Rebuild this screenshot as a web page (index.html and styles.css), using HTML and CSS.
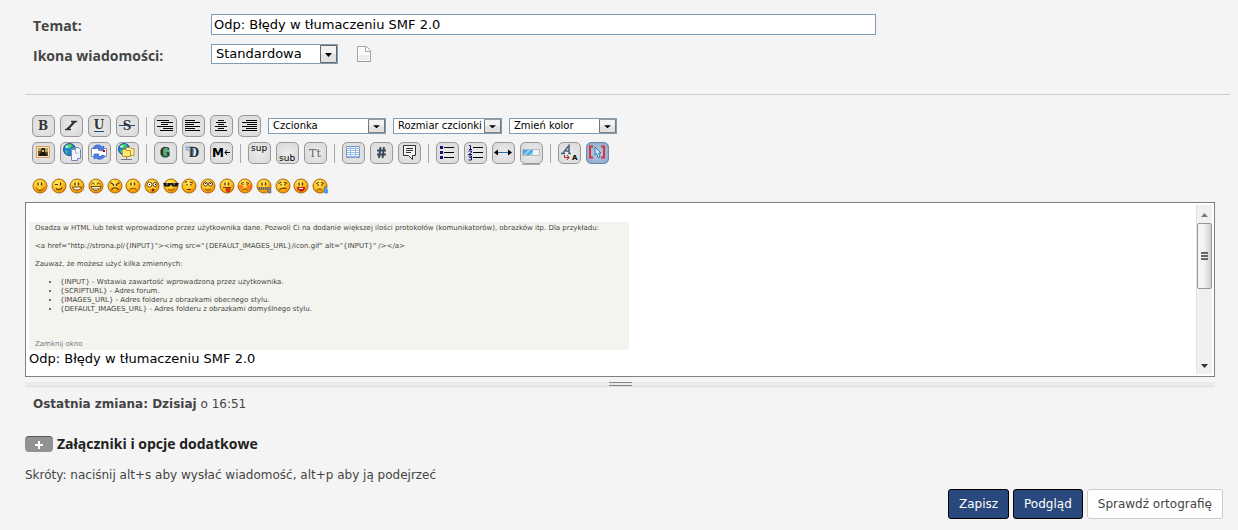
FILE: index.html
```
<!DOCTYPE html>
<html lang="pl">

<head>
    <meta charset="UTF-8">
    <title>Odp: Błędy w tłumaczeniu SMF 2.0</title>
    <link rel="stylesheet" href="styles.css">
</head>

<body>
    <!-- shared shapes -->
    <svg class="defs" width="0" height="0">
        <defs>
            <radialGradient id="skin" cx="40%" cy="30%" r="70%">
                <stop offset="0" stop-color="#ffee70" />
                <stop offset="0.55" stop-color="#ffc21c" />
                <stop offset="1" stop-color="#f08a00" />
            </radialGradient>
            <symbol id="face" viewBox="0 0 16 16">
                <circle cx="8" cy="8" r="7" fill="url(#skin)" stroke="#a8690c" />
            </symbol>
            <symbol id="eyes" viewBox="0 0 16 16">
                <path d="M6 4.500v3M9.500 4.500v3" stroke="#5a3000" stroke-width="1.300" />
            </symbol>
            <symbol id="globe" viewBox="0 0 16 16">
                <circle cx="7" cy="7" r="6.500" fill="#1f7fd8" stroke="#164c8c" />
                <path d="M2 4l4-3 4 1-2 3-3 1zM8 7l4-2 1 3-3 4zM2 8l3 1-1 3z" fill="#4edb4e" />
                <path d="M3 5l2-2" stroke="#d4f4ff" stroke-width="2" />
            </symbol>
        </defs>
    </svg>

    <form class="post-form" action="#">
        <div class="post-header">
            <label for="subject">Temat:</label>
            <div class="field"><input type="text" id="subject" class="subject" value="Odp: Błędy w tłumaczeniu SMF 2.0"></div>
            <label for="icon">Ikona wiadomości:</label>
            <div class="field">
                <select id="icon" class="icon-select">
                    <option>Standardowa</option>
                </select>
                <svg class="page-icon" width="14" height="16" viewBox="0 0 14 16">
                    <path d="M1 .500h8.500l4 4v11H.500V.500z" fill="#fafafa" stroke="#a5a5a5" />
                    <path d="M2 9h10v5H2z" fill="#ececec" />
                    <path d="M8.500 1v4.500H13" fill="#fff" stroke="#a5a5a5" />
                    <path d="M0 15.500h14" stroke="#999" />
                </svg>
            </div>
        </div>
        <hr>

        <div class="toolbar">
            <div class="row">
                <div class="group">
                    <button type="button" title="Pogrubienie"><svg viewBox="0 0 22 22"><text x="11" y="15" class="serif">B</text></svg></button>
                    <button type="button" title="Kursywa"><svg viewBox="0 0 22 22"><path d="M11 6.500h6M5 14.500h6M15 7l-8 7" stroke="#333" stroke-width="1.500" /><path d="M14 7l-6 7" stroke="#333" stroke-width="2" /></svg></button>
                    <button type="button" title="Podkreślenie"><svg viewBox="0 0 22 22"><text x="11" y="14" class="serif">U</text><path d="M6 16.500h10" stroke="#234b78" /></svg></button>
                    <button type="button" title="Przekreślenie"><svg viewBox="0 0 22 22"><text x="11" y="15" class="serif">S</text><path d="M3 10.500h16" stroke="#234b78" /></svg></button>
                </div>
                <span class="sep"></span>
                <div class="group">
                    <button type="button" title="Tekst preformatowany"><svg viewBox="0 0 22 22"><path d="M3 5.500h12M7 7.500h12M7 9.500h7M3 11.500h16M9 13.500h10M6 15.500h13" stroke="#000" /></svg></button>
                    <button type="button" title="Do lewej"><svg viewBox="0 0 22 22"><path d="M3 5.500h10M3 7.500h15M3 9.500h9M3 11.500h15M3 13.500h10M3 15.500h15" stroke="#000" /></svg></button>
                    <button type="button" title="Wyśrodkuj"><svg viewBox="0 0 22 22"><path d="M8 5.500h6M6 7.500h10M8 9.500h6M5 11.500h12M8 13.500h6M5 15.500h12" stroke="#000" /></svg></button>
                    <button type="button" title="Do prawej"><svg viewBox="0 0 22 22"><path d="M8 5.500h11M4 7.500h15M9 9.500h10M4 11.500h15M8 13.500h11M4 15.500h15" stroke="#000" /></svg></button>
                </div>
                <select class="font-face" aria-label="Czcionka">
                    <option>Czcionka</option>
                </select>
                <select class="font-size" aria-label="Rozmiar czcionki">
                    <option>Rozmiar czcionki</option>
                </select>
                <select class="font-color" aria-label="Zmień kolor">
                    <option>Zmień kolor</option>
                </select>
            </div>
            <div class="row">
                <div class="group">
                    <button type="button" title="Wstaw obrazek"><svg viewBox="0 0 22 22"><path d="M4.500 4.500h13v11h-13z" fill="#f8e9c4" stroke="#d99a62" /><path d="M6 6h10v8H6z" fill="#665522" /><path d="M6 6h4v3H6zM13 6h3v4h-3z" fill="#b2a45c" /><path d="M7 14c0-3 2-2 2-5 0-4 4-4 4 0 0 3 2 2 2 5z" fill="#201510" /><path d="M10 8h2v2h-2z" fill="#e9bd78" /></svg></button>
                    <button type="button" title="Wstaw link"><svg viewBox="0 0 22 22"><use href="#globe" x="3" y="1" width="15" height="15" /><path d="M11.500 7.500h4v-2h3l2 2v9h-3v2h-6z" fill="#f0f4ff" stroke="#7785b5" /><path d="M15.500 8v3h3" fill="none" stroke="#a8b3d5" /></svg></button>
                    <button type="button" title="Wstaw email"><svg viewBox="0 0 22 22"><path d="M3.500 6.500h15v8h-15z" fill="#fff" stroke="#889" /><path d="M5 6c2-4 7-4 9-1l2-1-1 5-5-1 2-1c-2-2-4-2-5 0zM17 14c-2 4-7 4-9 2l-2 1v-5h5l-1 2c2 1 3 0 4-1z" fill="#4e83ee" stroke="#2756bd" stroke-width=".600" /><path d="M15 8h2v2h-2z" fill="#c00" /></svg></button>
                    <button type="button" title="Wstaw FTP"><svg viewBox="0 0 22 22"><use href="#globe" x="2" y="1" width="14" height="14" /><path d="M10 5.500h4l1 1h3v7h-8z" fill="#fff0a0" stroke="#b99b22" /><path d="M6.500 7.500h3l1 1h4v6h-8z" fill="#ffe879" stroke="#b99b22" /><path d="M10.500 15v2.500M5 17.500h11" stroke="#777" /></svg></button>
                </div>
                <span class="sep"></span>
                <div class="group">
                    <button type="button" title="Poświata"><svg viewBox="0 0 22 22"><ellipse cx="11" cy="10.500" rx="5" ry="6" fill="#7cc792" /><ellipse cx="11" cy="10.500" rx="4" ry="5" fill="#5cb077" /><text x="11" y="15" class="serif">G</text></svg></button>
                    <button type="button" title="Cień"><svg viewBox="0 0 22 22"><path d="M4 5h8l-1 9H8V8H5z" fill="#c7dcf1" stroke="#6797cb" /><text x="12" y="15" class="serif">D</text></svg></button>
                    <button type="button" title="Przesuwający się tekst"><svg viewBox="0 0 22 22"><text x="2" y="15" class="move">M</text><path d="M20 10.500h-5M17 8l-2 2.500L17 13" fill="none" stroke="#000" /></svg></button>
                </div>
                <span class="sep"></span>
                <div class="group">
                    <button type="button" title="Indeks górny"><svg viewBox="0 0 22 22"><text x="3" y="9" class="tiny">sup</text></svg></button>
                    <button type="button" title="Indeks dolny"><svg viewBox="0 0 22 22"><text x="3" y="19" class="tiny">sub</text></svg></button>
                    <button type="button" title="Dalekopis"><svg viewBox="0 0 22 22"><text x="11" y="15" class="tele">Tt</text></svg></button>
                </div>
                <span class="sep"></span>
                <div class="group">
                    <button type="button" title="Wstaw tabelę"><svg viewBox="0 0 22 22"><path d="M4.500 4.500h13v11h-13z" fill="#fff" stroke="#7299ce" /><path d="M4 6.500h14M5 8.500h12M5 10.500h12M5 12.500h12M5 14.500h12M8.500 5v11M13.500 5v11" stroke="#9bbbe2" /></svg></button>
                    <button type="button" title="Wstaw kod"><svg viewBox="0 0 22 22"><path d="M10.500 5L9 16M14 5l-1.500 11M7 8.500h9M7 12.500h9" stroke="#3c4a60" stroke-width="2" /></svg></button>
                    <button type="button" title="Wstaw cytat"><svg viewBox="0 0 22 22"><path d="M5.500 3.500h12v10h-3v4l-4-4h-5z" fill="#f4f4f4" stroke="#333" /><path d="M8 6.500h7M8 8.500h7M8 10.500h5" stroke="#333" /></svg></button>
                </div>
                <span class="sep"></span>
                <div class="group">
                    <button type="button" title="Lista"><svg viewBox="0 0 22 22"><path d="M4 4h3v3H4zM4 9h3v3H4zM4 14h3v3H4z" fill="#12127c" /><path d="M8 5.500h10M8 10.500h10M8 15.500h10" stroke="#000" /></svg></button>
                    <button type="button" title="Lista numerowana"><svg viewBox="0 0 22 22"><path d="M5 3.500h1.500V7M5 7.500h3M4.500 9h3v1.500l-3 2H8M4.500 14h3v1.500h-2 2V18h-3" fill="none" stroke="#12127c" /><path d="M9 5.500h10M9 10.500h10M9 15.500h10" stroke="#000" /></svg></button>
                    <button type="button" title="Linia pozioma"><svg viewBox="0 0 22 22"><path d="M4 10.500h14" stroke="#356baa" /><path d="M2 10.500l4-3v6zM20 10.500l-4-3v6z" fill="#000" /></svg></button>
                    <button type="button" title="Pasek postępu"><svg viewBox="0 0 22 22"><path d="M2.500 7.500h17v6h-17z" fill="#f0f3f5" stroke="#b5bbc0" /><path d="M3 8h10v5H3z" fill="#48a2e2" /><path d="M3 13l5-5h3l-5 5zM9 13l4-4v4z" fill="#91cdf5" /><path d="M2 22.500h18" stroke="#aaa" /></svg></button>
                </div>
                <span class="sep"></span>
                <div class="group">
                    <button type="button" title="Usuń formatowanie"><svg viewBox="0 0 22 22"><path d="M3 11.500h4M5 11l6-7.500v8h2M7.500 9H11" fill="none" stroke="#48627a" stroke-width="1.500" /><path d="M6.500 13v2.500H11M9 13l2 2.500L9 18" fill="none" stroke="#a32222" /><text x="14" y="18" class="small-a">A</text></svg></button>
                    <button type="button" class="active" title="Przełącz widok"><svg viewBox="0 0 22 22"><path d="M7 4.500H4v11h3M15 4.500h3v11h-3" fill="none" stroke="#dd3038" stroke-width="2" /><path d="M9 5l6 6h-2.500l1.500 4-2 .500-1.500-4L9 13z" fill="#d4e8fa" stroke="#3f75af" /></svg></button>
                </div>
            </div>
        </div>

        <div class="smileys">
            <svg viewBox="0 0 16 16"><use href="#face" /><use href="#eyes" /><path d="M4 9.500c1.500 4 6.500 4 8 0" fill="none" stroke="#704000" /></svg>
            <svg viewBox="0 0 16 16"><use href="#face" /><path d="M4 6.500h3M9.500 4.500v3M5 10.500c2 2 5 1 6-1" fill="none" stroke="#5a3000" stroke-width="1.200" /></svg>
            <svg viewBox="0 0 16 16"><use href="#face" /><use href="#eyes" /><path d="M3.500 9h9c-1 4-8 4-9 0z" fill="#fff" stroke="#704000" /></svg>
            <svg viewBox="0 0 16 16"><use href="#face" /><path d="M3.500 6.500c0-2 3-2 3 0M9 6.500c0-2 3-2 3 0" fill="none" stroke="#5a3000" /><path d="M3 8.500h10c-1 5-9 5-10 0z" fill="#fff" stroke="#704000" /><path d="M4 10.500h8" stroke="#704000" stroke-width=".500" /></svg>
            <svg viewBox="0 0 16 16"><use href="#face" /><path d="M3.500 4.500l3 2v1.500M12.500 4.500l-3 2v1.500M4.500 12c1-3 6-3 7 0" fill="none" stroke="#5a3000" stroke-width="1.200" /></svg>
            <svg viewBox="0 0 16 16"><use href="#face" /><use href="#eyes" /><path d="M4.500 12.500c1-3 6-3 7 0" fill="none" stroke="#704000" /></svg>
            <svg viewBox="0 0 16 16"><use href="#face" /><circle cx="5.500" cy="6.500" r="2.500" fill="#fff" stroke="#704000" /><circle cx="11" cy="6.500" r="2" fill="#fff" stroke="#704000" /><path d="M5 6h1v1H5zM11 6h1v1h-1z" /><circle cx="9" cy="12" r="1.500" fill="#703000" /></svg>
            <svg viewBox="0 0 16 16"><use href="#face" /><path d="M0 5h16l-1.500 3.500h-5L8 6.500 6.500 8.500h-5z" fill="#151515" /><path d="M3 6h2M10 6h2" stroke="#aaa" /><path d="M5 11c2 2 5 1.500 6.500-.500" fill="none" stroke="#704000" /></svg>
            <svg viewBox="0 0 16 16"><use href="#face" /><path d="M4 4.500l2-1M9 4l3 1M6 6v1.500M10 6v1.500M6 11.500h4" stroke="#5a3000" stroke-width="1.200" /></svg>
            <svg viewBox="0 0 16 16"><use href="#face" /><circle cx="5.500" cy="6" r="2" fill="#fff" stroke="#704000" /><circle cx="10.500" cy="6" r="2" fill="#fff" stroke="#704000" /><path d="M5 5h1v1H5zM10 5h1v1h-1z" /><path d="M5 11c2 1.500 4 1.500 6 0" fill="none" stroke="#704000" /></svg>
            <svg viewBox="0 0 16 16"><use href="#face" /><use href="#eyes" /><path d="M4 9.500h8" stroke="#704000" /><path d="M7 10h4v3c-1 2-4 1-4-1z" fill="#e8321e" stroke="#a41d10" stroke-width=".500" /></svg>
            <svg viewBox="0 0 16 16"><use href="#face" /><circle cx="4" cy="9" r="2.500" fill="#ff5b24" opacity=".700" /><circle cx="12" cy="9" r="2.500" fill="#ff5b24" opacity=".700" /><path d="M4 5.500l3-1M9 4.500l3 1M6 6v1M10 6v1M5.500 12.500c1-2 4-2 5 0" fill="none" stroke="#5a3000" /></svg>
            <svg viewBox="0 0 16 16"><use href="#face" /><use href="#eyes" /><path d="M2.500 10.500h11" stroke="#666" stroke-width="3" stroke-dasharray="1.500 .500" /><path d="M12 10h3v5h-3z" fill="#888" stroke="#555" stroke-width=".500" /></svg>
            <svg viewBox="0 0 16 16"><use href="#face" /><path d="M3.500 5.500l3-1.500M9 4l3 1.500M6 6v1.500M10 6v1.500M4.500 12c2-3 4-1 7-2" fill="none" stroke="#5a3000" stroke-width="1.200" /></svg>
            <svg viewBox="0 0 16 16"><use href="#face" /><use href="#eyes" /><path d="M4 9.500l2-.500 2 .500 2-.500 2 .500c-.500 5-7 5-8 0z" fill="#d81818" stroke="#8f1010" stroke-width=".500" /><path d="M6 10.500h4" stroke="#fff" /></svg>
            <svg viewBox="0 0 16 16"><use href="#face" /><path d="M4 5.500l3-1M9 4.500l3 1M6 6v2M10 6v2M5 12.500c1-2 4-2 5 0" fill="none" stroke="#5a3000" /><path d="M13 8c2 3 3 4 3 5.500 0 3-4.500 2-4-.500z" fill="#49a4ee" stroke="#2779bd" stroke-width=".500" /></svg>
        </div>

        <div class="editor">
            <div class="message" contenteditable="true" spellcheck="false">
                <div class="embed">
                    <p>Osadza w HTML lub tekst wprowadzone przez użytkownika dane. Pozwoli Ci na dodanie większej ilości protokołów (komunikatorów), obrazków itp. Dla przykładu:</p>
                    <p>&lt;a href="http://strona.pl/{INPUT}"&gt;&lt;img src="{DEFAULT_IMAGES_URL}/icon.gif" alt="{INPUT}" /&gt;&lt;/a&gt;</p>
                    <p>Zauważ, że możesz użyć kilka zmiennych:</p>
                    <ul>
                        <li>{INPUT} - Wstawia zawartość wprowadzoną przez użytkownika.</li>
                        <li>{SCRIPTURL} - Adres forum.</li>
                        <li>{IMAGES_URL} - Adres folderu z obrazkami obecnego stylu.</li>
                        <li>{DEFAULT_IMAGES_URL} - Adres folderu z obrazkami domyślnego stylu.</li>
                    </ul>
                    <p class="close">Zamknij okno</p>
                </div>
                Odp: Błędy w tłumaczeniu SMF 2.0
            </div>
            <div class="scrollbar">
                <svg width="7" height="4" viewBox="0 0 7 4"><path d="M0 4h7L3.500 0z" fill="#777" /></svg>
                <div class="track">
                    <div class="thumb"><i></i><i></i><i></i></div>
                </div>
                <svg width="7" height="4" viewBox="0 0 7 4"><path d="M0 0h7L3.500 4z" fill="#333" /></svg>
            </div>
        </div>
        <div class="resizer"><span></span></div>

        <p class="modified"><strong>Ostatnia zmiana: Dzisiaj</strong> o 16:51</p>

        <h4 class="additional">
            <button type="button" class="expand" aria-label="Rozwiń"><svg width="8" height="8" viewBox="0 0 8 8"><path d="M4 0v8M0 4h8" stroke="#fff" stroke-width="2" /></svg></button>
            Załączniki i opcje dodatkowe
        </h4>
        <p class="shortcuts">Skróty: naciśnij alt+s aby wysłać wiadomość, alt+p aby ją podejrzeć</p>
        <div class="actions">
            <button type="submit" class="primary">Zapisz</button>
            <button type="button" class="primary">Podgląd</button>
            <button type="button">Sprawdź ortografię</button>
        </div>
    </form>
</body>

</html>
```
FILE: styles.css
```
* {
    box-sizing: border-box;
}

body {
    margin: 0;
    background: #f4f4f4;
    color: #444;
    font-family: "DejaVu Sans", sans-serif;
    font-size: 12px;
}

.defs {
    position: absolute;
}

.post-form {
    padding: 14px 8px 11px 25px;
}

/* subject and icon */
.post-header {
    display: grid;
    grid-template-columns: 178px 1fr;
    row-gap: 8px;
    padding-left: 8px;
}

.post-header label {
    padding-top: 2px;
    font: bold 14px/20px "Open Sans", sans-serif;
}

.field {
    display: flex;
    align-items: flex-start;
    gap: 19px;
}

input,
select {
    border: 1px solid #7f9db9;
    border-radius: 0;
    background-color: #fff;
    color: #000;
    font-family: "DejaVu Sans", sans-serif;
}

.subject {
    width: 665px;
    max-width: 100%;
    height: 21px;
    padding: 0 2px;
    font-size: 13px;
}

select {
    appearance: none;
    height: 16px;
    padding: 0 0 0 4px;
    font-size: 10px;
    line-height: 14px;
    background-image: url("data:image/svg+xml,%3Csvg xmlns='http://www.w3.org/2000/svg' width='17' height='18' viewBox='0 0 17 18' preserveAspectRatio='none'%3E%3Cpath d='M.5 .5h16v17H.5z' fill='%23e2e2e2' stroke='%23666'/%3E%3Cpath d='M1 1h15v8H1z' fill='%23f2f2f2'/%3E%3Cpath d='M5 8h7l-3.5 4z'/%3E%3C/svg%3E");
    background-repeat: no-repeat;
    background-position: right center;
    background-size: 17px 100%;
}

.icon-select {
    width: 127px;
    height: 20px;
    font-size: 13px;
    line-height: 18px;
}

.page-icon {
    margin-top: 2px;
}

hr {
    height: 1px;
    margin: 28px 0 20px;
    border: 0;
    background: #ccc;
}

/* bbc buttons */
.toolbar {
    display: flex;
    flex-direction: column;
    gap: 5px;
    padding-left: 7px;
}

.row {
    display: flex;
    align-items: center;
    gap: 7px;
}

.group {
    display: flex;
    gap: 5px;
}

.group button {
    width: 23px;
    height: 22px;
    padding: 0;
    border: 1px solid #999;
    border-radius: 5px;
    background: radial-gradient(#ececec, #d8d8d8);
}

.group button.active {
    border-color: #6c86a5;
    background: radial-gradient(#b7cde6, #86a3c6);
}

.group svg {
    display: block;
    width: 22px;
    height: 22px;
    margin: -1px;
    overflow: visible;
}

.sep {
    width: 1px;
    height: 19px;
    background: #aaa;
}

.font-face {
    width: 118px;
}

.font-size {
    width: 109px;
}

.font-color {
    width: 108px;
}

.serif {
    font: bold 12px "DejaVu Serif", serif;
    text-anchor: middle;
    fill: #333;
}

.move {
    font: bold 12px "DejaVu Sans", sans-serif;
}

.tiny {
    font: 9px "DejaVu Sans", sans-serif;
}

.tele {
    font: 11px "DejaVu Serif", serif;
    text-anchor: middle;
    fill: #666;
}

.small-a {
    font: bold 7px "DejaVu Sans", sans-serif;
}

.smileys {
    display: flex;
    justify-content: space-between;
    width: 296px;
    margin: 14px 0 8px 7px;
}

.smileys svg {
    width: 16px;
    height: 16px;
}

/* editor box */
.editor {
    display: flex;
    margin-right: 15px;
    padding: 2px;
    border: 1px solid #808080;
    background: #fff;
}

.message {
    flex: 1;
    padding: 17px 1px 6px;
    color: #000;
    font: 13px/18px "DejaVu Sans", sans-serif;
}

.embed {
    max-width: 600px;
    padding: 2px 6px 1px;
    background: #f4f4ee;
    color: #444;
    font-size: 7px;
    line-height: 9px;
}

.embed p {
    margin: 0 0 9px;
}

.embed ul {
    margin: 0 0 26px;
    padding-left: 25px;
}

.embed .close {
    margin: 0;
    color: #777788;
}

.scrollbar {
    display: flex;
    flex-direction: column;
    align-items: center;
    gap: 6px;
    width: 16px;
    padding: 8px 0 6px;
    border-left: 1px solid #e3e3e3;
    background: #f0f0f0;
}

.track {
    flex: 1;
    width: 100%;
}

.thumb {
    display: flex;
    flex-direction: column;
    align-items: center;
    justify-content: center;
    gap: 1px;
    height: 66px;
    border: 1px solid #979797;
    border-radius: 2px;
    background: linear-gradient(to right, #f5f5f5 40%, #cfcfd3);
}

.thumb i {
    width: 7px;
    height: 2px;
    background: #666;
}

.resizer {
    display: flex;
    justify-content: center;
    height: 5px;
    margin: 5px 15px 0 0;
    border-bottom: 1px solid #ddd;
    background: #ebebeb;
}

.resizer span {
    width: 23px;
    height: 4px;
    border: solid #888;
    border-width: 1px 0;
}

/* below the editor */
.modified {
    margin: 9px 0 0 8px;
    line-height: 16px;
}

.additional {
    display: flex;
    align-items: center;
    gap: 4px;
    margin: 22px 0 0;
    color: #222;
    font: bold 14px/20px "Open Sans", sans-serif;
}

.expand {
    display: flex;
    align-items: center;
    justify-content: center;
    width: 28px;
    height: 16px;
    padding: 0;
    border: 0;
    border-top: 1px solid #555;
    border-radius: 4px;
    background: #929292;
}

.shortcuts {
    margin: 13px 0 6px;
    line-height: 16px;
}

.actions {
    display: flex;
    justify-content: flex-end;
    gap: 4px;
    padding-right: 7px;
}

.actions button {
    height: 30px;
    padding: 0 10px;
    border: 1px solid #ccc;
    border-radius: 3px;
    background: #fff;
    color: #444;
    font: 12px "DejaVu Sans", sans-serif;
}

.actions .primary {
    border-color: #000;
    background: #29487d;
    color: #fff;
}
```
